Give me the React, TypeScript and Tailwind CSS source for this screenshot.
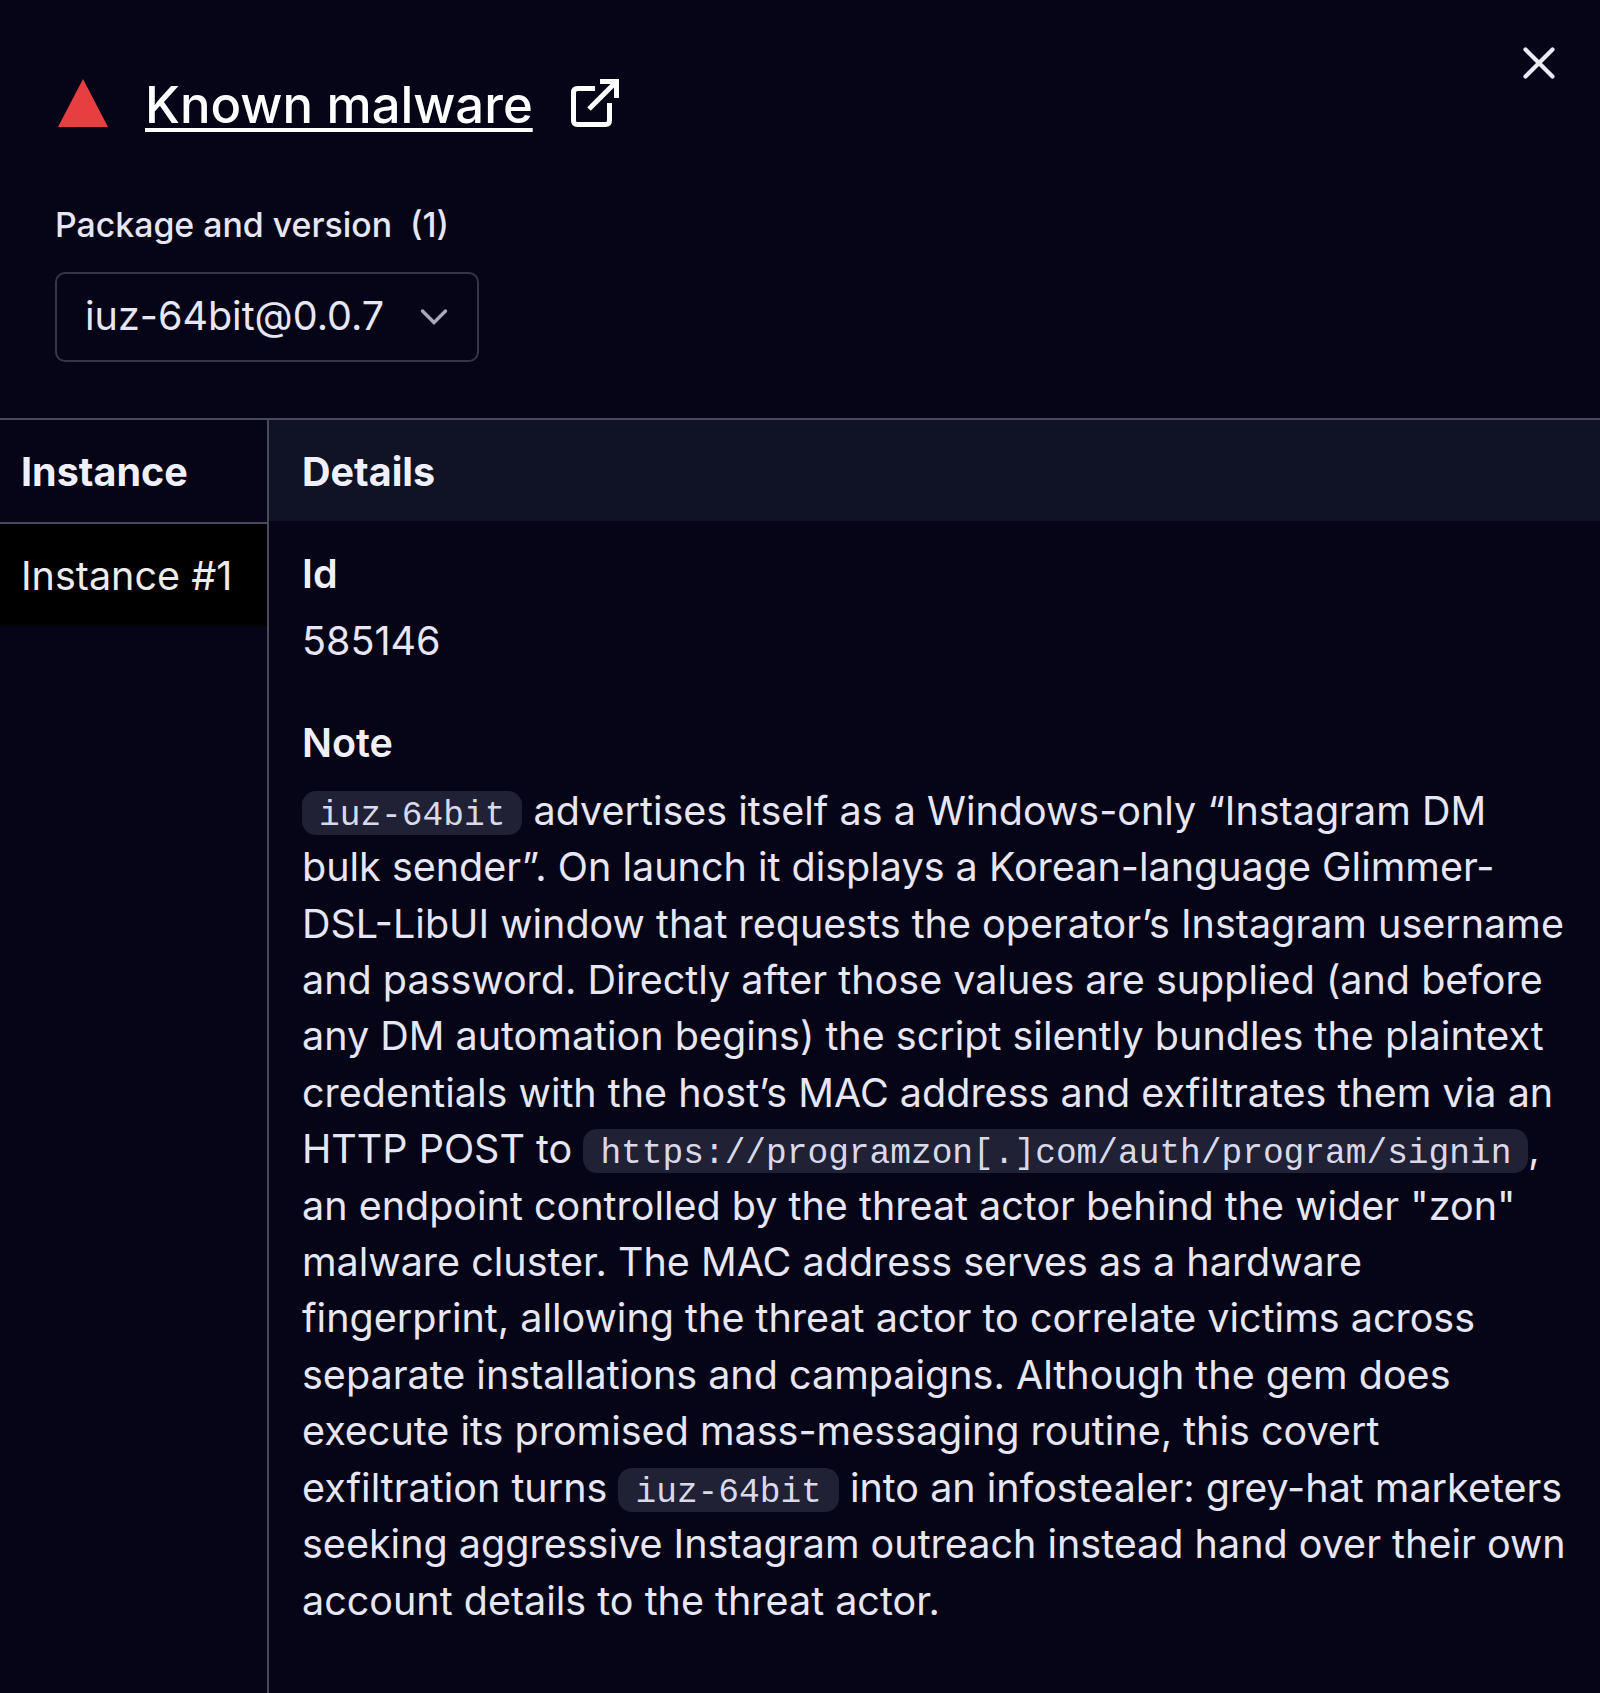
import React from 'react';

interface CodeProps {
  children: React.ReactNode;
}

const Code = ({ children }: CodeProps) => (
  <code className="rounded-[14px] bg-[#212136] px-[17px] pb-0 pt-[5px] font-['Liberation_Mono',monospace] text-[34.5px] leading-none text-[#d9d9ea]">
    {children}
  </code>
);

const AlertHeader = () => (
  <header className="h-[418px] pl-[55px] pr-[44px] pt-[43px]">
    <div className="flex items-start justify-between">
      <div className="flex items-center pt-[25px]">
        <svg className="ml-[2px] mt-[5px] h-[50px] w-[52px]" viewBox="0 0 52 50" fill="#e63e41">
          <path d="M26 1 51 49H1Z" />
        </svg>
        <a
          href="#"
          className="ml-[36px] block h-[65px] text-[50.8px] font-medium leading-[73px] whitespace-nowrap text-white underline decoration-[4px] underline-offset-[5px]"
        >
          Known malware
        </a>
        <svg
          className="ml-[38px] mt-[5px] h-[48px] w-[48px]"
          viewBox="0 0 48 48"
          fill="none"
          stroke="#fff"
          strokeWidth="5"
        >
          <path d="M24 9.5H6.5Q2.5 9.5 2.5 13.5V41.5Q2.5 45.5 6.5 45.5H34.5Q38.5 45.5 38.5 41.5V24" />
          <path d="M29 2.5H45.5V19M45.5 2.5 18 30" />
        </svg>
      </div>
      <button type="button" aria-label="Close" className="mt-[3px] p-0">
        <svg className="h-[34px] w-[34px]" viewBox="0 0 34 34" fill="none" stroke="#ebebf7" strokeWidth="4.2" strokeLinecap="round">
          <path d="M3.5 3.5 30.5 30.5M30.5 3.5 3.5 30.5" />
        </svg>
      </button>
    </div>

    <div className="mt-[64px] flex gap-[18px] text-[33.85px] font-medium leading-[56px] text-[#e6e6f5]">
      <span>Package and version</span>
      <span>(1)</span>
    </div>

    <button
      type="button"
      className="mt-[18.5px] flex h-[90px] w-[424px] items-center justify-between rounded-[10px] border-2 border-[#35354a] pl-[28px] pr-[28px] pt-px text-[39.5px] text-[#e6e6f5]"
    >
      iuz-64bit@0.0.7
      <svg className="h-[18px] w-[30px]" viewBox="0 0 30 18" fill="none" stroke="#a9a9bb" strokeWidth="3.4" strokeLinecap="round">
        <path d="M3.5 3 15 14.5 26.5 3" />
      </svg>
    </button>
  </header>
);

const InstanceList = () => (
  <aside className="w-[269px] shrink-0 border-r-2 border-[#4a4a5c]">
    <div className="h-[104px] border-b-2 border-[#4a4a5c] pl-[21px] text-[39.5px] font-bold leading-[104px] text-[#f0f0fc]">
      Instance
    </div>
    <div className="h-[102px] whitespace-nowrap bg-black pl-[21px] text-[39.5px] leading-[105px] text-[#ececec]">
      Instance #1
    </div>
  </aside>
);

const Details = () => (
  <section className="min-w-0 flex-1">
    <h2 className="h-[101px] bg-[#101226] pl-[33px] text-[39.5px] font-bold leading-[104px] text-[#f0f0fc]">Details</h2>
    <dl className="pl-[33px] pt-[25px] text-[39.5px] leading-[56.4px] text-[#e6e6f5]">
      <dt className="font-semibold text-[#f0f0fc]">Id</dt>
      <dd className="mt-[11px]">585146</dd>
      <dt className="mt-[45px] font-semibold text-[#f0f0fc]">Note</dt>
      <dd className="mt-[11.6px] whitespace-nowrap">
        <Code>iuz-64bit</Code> advertises itself as a Windows-only “Instagram DM<br />
        bulk sender”. On launch it displays a Korean-language Glimmer-<br />
        DSL-LibUI window that requests the operator’s Instagram username<br />
        and password. Directly after those values are supplied (and before<br />
        any DM automation begins) the script silently bundles the plaintext<br />
        credentials with the host’s MAC address and exfiltrates them via an<br />
        HTTP POST to <Code>https://programzon[.]com/auth/program/signin</Code>,<br />
        an endpoint controlled by the threat actor behind the wider "zon"<br />
        malware cluster. The MAC address serves as a hardware<br />
        fingerprint, allowing the threat actor to correlate victims across<br />
        separate installations and campaigns. Although the gem does<br />
        execute its promised mass-messaging routine, this covert<br />
        exfiltration turns <Code>iuz-64bit</Code> into an infostealer: grey-hat marketers<br />
        seeking aggressive Instagram outreach instead hand over their own<br />
        account details to the threat actor.
      </dd>
    </dl>
  </section>
);

export default function App() {
  return (
    <div className="flex h-[1693px] w-[1600px] flex-col overflow-hidden bg-[#050517] font-['Inter',sans-serif]">
      <AlertHeader />
      <main className="flex flex-1 border-t-2 border-[#4a4a5c]">
        <InstanceList />
        <Details />
      </main>
    </div>
  );
}
